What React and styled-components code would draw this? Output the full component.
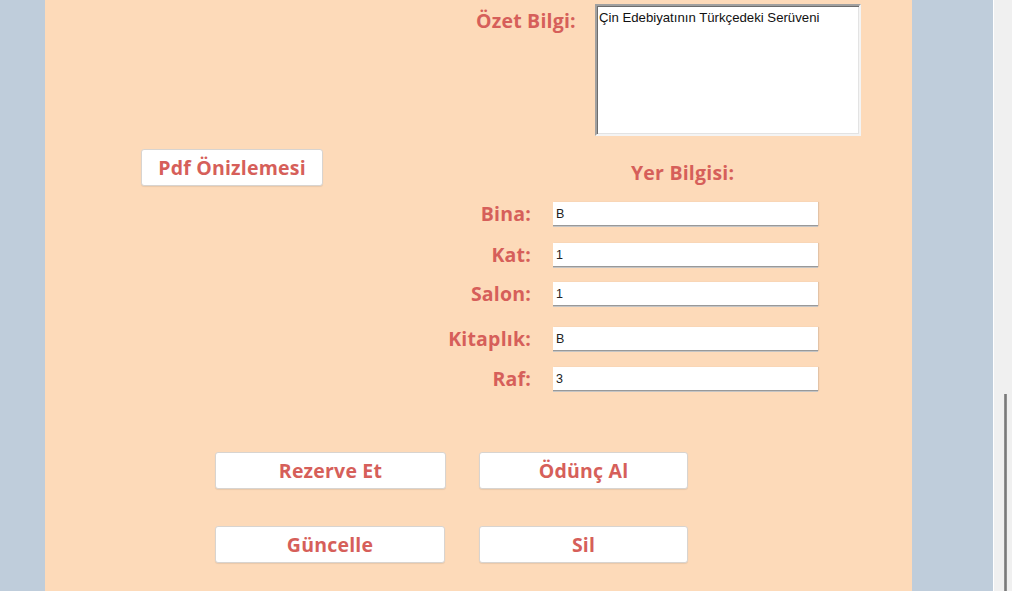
import styled, { createGlobalStyle } from 'styled-components'

const GlobalStyle = createGlobalStyle`
  html, body {
    margin: 0;
    padding: 0;
    overflow: hidden;
  }
  body {
    width: 1012px;
    height: 591px;
    font-family: 'Open Sans', 'Lato', sans-serif;
  }
`

const locationFields = [
  { label: 'Bina:', value: 'B', top: 17 },
  { label: 'Kat:', value: '1', top: 17 },
  { label: 'Salon:', value: '1', top: 15 },
  { label: 'Kitaplık:', value: 'B', top: 21 },
  { label: 'Raf:', value: '3', top: 16 },
]

const App = () => {
  return (
    <>
      <GlobalStyle />
      <Screen>
        <SideStrip $width={45} />
        <Panel>
          <SummaryRow>
            <Label>Özet Bilgi:</Label>
            <SummaryBox>Çin Edebiyatının Türkçedeki Serüveni</SummaryBox>
          </SummaryRow>

          <MiddleRow>
            <PdfColumn>
              <FormButton $width={182} $height={37}>
                Pdf Önizlemesi
              </FormButton>
            </PdfColumn>
            <LocationBlock>
              <LocationTitle>Yer Bilgisi:</LocationTitle>
              {locationFields.map((field) => (
                <FieldRow key={field.label} $top={field.top}>
                  <FieldLabel>{field.label}</FieldLabel>
                  <FieldInput>{field.value}</FieldInput>
                </FieldRow>
              ))}
            </LocationBlock>
          </MiddleRow>

          <ActionGrid>
            <FormButton $width={231} $height={37}>Rezerve Et</FormButton>
            <FormButton $width={209} $height={37}>Ödünç Al</FormButton>
            <FormButton $width={230} $height={37}>Güncelle</FormButton>
            <FormButton $width={209} $height={37}>Sil</FormButton>
          </ActionGrid>
        </Panel>
        <SideStrip $width={81} />
        <Divider />
        <Scrollbar>
          <Thumb />
        </Scrollbar>
      </Screen>
    </>
  )
}

export default App

const Screen = styled.div`
  display: flex;
  width: 1012px;
  height: 591px;
  background: #bfcddb;
`

const SideStrip = styled.div`
  width: ${(p) => p.$width}px;
  flex: none;
  background: #bfcddb;
`

const Panel = styled.div`
  width: 867px;
  flex: none;
  background: #fddab9;
  display: flex;
  flex-direction: column;
  padding-top: 4px;
  box-sizing: border-box;
`

const Label = styled.div`
  color: #d65f5a;
  font-weight: 700;
  font-size: 19.5px;
  line-height: 24px;
  letter-spacing: 0.2px;
  white-space: nowrap;
`

const SummaryRow = styled.div`
  display: flex;
  align-items: flex-start;
  padding-left: 431px;
  gap: 17px;

  ${Label} {
    width: 102px;
    margin-top: 5px;
  }
`

const SummaryBox = styled.div`
  width: 266px;
  height: 132px;
  box-sizing: border-box;
  background: #fff;
  border-top: 2px solid #a0a0a0;
  border-left: 2px solid #a0a0a0;
  border-right: 2px solid #f4f4f4;
  border-bottom: 2px solid #f4f4f4;
  box-shadow: inset 1px 1px 0 #6d6d6d, inset -1px -1px 0 #e3e3e3;
  padding: 4px 0 0 2px;
  font-family: 'Liberation Sans', Arial, sans-serif;
  font-size: 13.2px;
  line-height: 15px;
  color: #111;
`

const MiddleRow = styled.div`
  display: flex;
  margin-top: 13px;
`

const PdfColumn = styled.div`
  width: 380px;
  padding-left: 96px;
  box-sizing: border-box;
`

const FormButton = styled.div`
  width: ${(p) => p.$width}px;
  height: ${(p) => p.$height}px;
  box-sizing: border-box;
  display: flex;
  align-items: center;
  justify-content: center;
  background: #fff;
  border: 1px solid #d8d4d0;
  border-radius: 3px;
  box-shadow: 0 1px 1px rgba(0, 0, 0, 0.08);
  color: #d65f5a;
  font-weight: 700;
  font-size: 19.5px;
  letter-spacing: 0.2px;
  white-space: nowrap;
`

const LocationBlock = styled.div`
  display: flex;
  flex-direction: column;
`

const LocationTitle = styled(Label)`
  margin: 12px 0 0 206px;
`

const FieldRow = styled.div`
  display: grid;
  grid-template-columns: 106px 265px;
  column-gap: 22px;
  align-items: center;
  margin-top: ${(p) => p.$top}px;
`

const FieldLabel = styled(Label)`
  text-align: right;
`

const FieldInput = styled.div`
  height: 24px;
  box-sizing: border-box;
  background: #fff;
  border-bottom: 1px solid #999;
  box-shadow: 0 1px 0 #c4c4c4, 1px 0 1px rgba(0, 0, 0, 0.1);
  padding: 5px 0 0 3px;
  font-family: 'Liberation Sans', Arial, sans-serif;
  font-size: 12.5px;
  line-height: 15px;
  color: #222;
`

const ActionGrid = styled.div`
  display: grid;
  grid-template-columns: 231px 209px;
  column-gap: 33px;
  row-gap: 37px;
  padding-left: 170px;
  margin-top: 61px;
`

const Divider = styled.div`
  width: 1px;
  flex: none;
  background: #ffffff;
`

const Scrollbar = styled.div`
  flex: 1;
  background: #f0f0f0;
  padding: 394px 0 0 10px;
  box-sizing: border-box;
`

const Thumb = styled.div`
  width: 3px;
  height: 200px;
  background: linear-gradient(to right, #9a9a9a, #7a7a7a, #9a9a9a);
`
